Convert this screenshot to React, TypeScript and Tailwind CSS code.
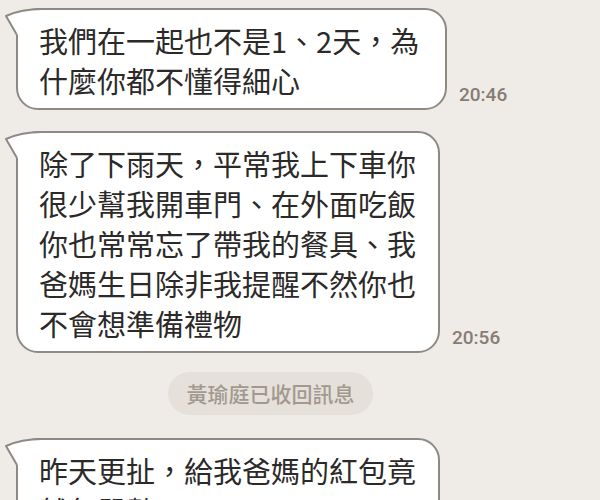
import React from "react";

const Tail = () => (
  <svg
    className="absolute -left-[2px] -top-[2px] overflow-visible"
    width="30"
    height="30"
    viewBox="0 0 30 30"
  >
    <path d="M26 1 C12 1 1 3 -10 8 L1 27 L26 27 Z" fill="#ffffff" />
    <path
      d="M26 1 C12 1 1 3 -10 8 L1 27"
      fill="none"
      stroke="#8e8984"
      strokeWidth="2"
      strokeLinejoin="round"
    />
  </svg>
);

function Bubble({ lines, width }: { lines: string[]; width: string }) {
  return (
    <div
      className={`relative rounded-[22px] border-2 border-[#8e8984] bg-white pl-[21px] pr-4 pt-[10px] pb-[8px] ${width}`}
    >
      <Tail />
      <div className="relative text-[29px] leading-[40px] text-[#2b2a29]">
        {lines.map((l, i) => (
          <div key={i} className="whitespace-nowrap">
            {l}
          </div>
        ))}
      </div>
    </div>
  );
}

function Time({ t }: { t: string }) {
  return (
    <div
      className="mb-[5px] text-[19px] font-medium leading-[20px] text-[#857d74]"
      style={{ fontFamily: "Roboto, 'Liberation Sans', sans-serif" }}
    >
      {t}
    </div>
  );
}

export default function App() {
  return (
    <div
      className="h-[500px] w-[600px] overflow-hidden bg-[#efebe6] pt-[8px]"
      style={{ fontFamily: "'Noto Sans CJK TC', 'Noto Sans', sans-serif" }}
    >
      <div className="flex items-end gap-[12px] pl-[16px]">
        <Bubble
          width="w-[431px]"
          lines={["我們在一起也不是1、2天，為", "什麼你都不懂得細心"]}
        />
        <Time t="20:46" />
      </div>
      <div className="mt-[21px] flex items-end gap-[12px] pl-[16px]">
        <Bubble
          width="w-[424px]"
          lines={[
            "除了下雨天，平常我上下車你",
            "很少幫我開車門、在外面吃飯",
            "你也常常忘了帶我的餐具、我",
            "爸媽生日除非我提醒不然你也",
            "不會想準備禮物",
          ]}
        />
        <Time t="20:56" />
      </div>
      <div className="mt-[19px] flex pl-[168px]">
        <div className="flex h-[43px] w-[205px] items-center justify-center rounded-full bg-[#e5e0da] text-[21px] font-medium text-[#a19990]">
          黃瑜庭已收回訊息
        </div>
      </div>
      <div className="mt-[23px] flex items-end gap-[12px] pl-[16px]">
        <Bubble
          width="w-[424px]"
          lines={["昨天更扯，給我爸媽的紅包竟", "然包單數5000元"]}
        />
      </div>
    </div>
  );
}
